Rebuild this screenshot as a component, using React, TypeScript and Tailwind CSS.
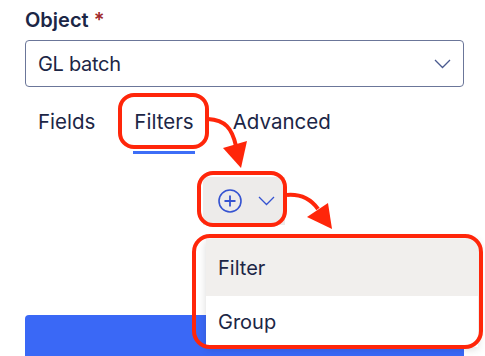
import React from 'react';

const tabs = ['Fields', 'Filters', 'Advanced'];
const menuItems = ['Filter', 'Group'];

function Chevron({ className }: { className?: string }) {
  return (
    <svg width="17" height="10" viewBox="0 0 17 10" className={className} fill="none">
      <path d="M1 1 L8.5 8.5 L16 1" stroke="currentColor" strokeWidth="1.3" />
    </svg>
  );
}

function Annotations() {
  const red = '#ff260a';
  return (
    <svg className="absolute inset-0 pointer-events-none" width="485" height="356" viewBox="0 0 485 356" fill="none">
      {/* tab highlight */}
      <rect x="120" y="95" width="87" height="52" rx="14" stroke={red} strokeWidth="4" />
      <path d="M208 119 C225 120 232 128 236 146" stroke={red} strokeWidth="4" />
      <path d="M223 148 L247 141 L241 168 Z" fill={red} />
      {/* add button highlight */}
      <rect x="199" y="173" width="86" height="52" rx="14" stroke={red} strokeWidth="4" />
      <path d="M287 195 C300 194 310 198 318 209" stroke={red} strokeWidth="4" />
      <path d="M307 217 L328 203 L332 229 Z" fill={red} />
      {/* menu highlight */}
      <rect x="194" y="236" width="287" height="111" rx="16" stroke={red} strokeWidth="4" />
    </svg>
  );
}

export default function App() {
  return (
    <div className="relative w-[485px] h-[356px] overflow-hidden bg-white text-[#1c2646] font-['Inter',sans-serif]">
      <div className="pl-[25px] pr-[21px] pt-[6px]">
        <div className="text-[20px] font-semibold leading-[28px] h-[34px]">
          Object <span className="text-[#a0282a]">*</span>
        </div>
        <div className="flex items-center justify-between h-[47px] border border-[#6b7699] rounded-[4px] pl-[12px] pr-[12px]">
          <span className="text-[20px] tracking-[-0.3px]">GL batch</span>
          <Chevron className="text-[#4a5a8f]" />
        </div>
        <div className="flex gap-[39px] pl-[13px] mt-[21px] text-[20.5px] leading-[28px]">
          {tabs.map((tab) => (
            <div
              key={tab}
              className={
                tab === 'Filters'
                  ? 'pb-[15px] border-b-[3px] border-[#3d6ef7] px-[1px] -mx-[1px]'
                  : 'pb-[15px] border-b-[3px] border-transparent'
              }
            >
              {tab}
            </div>
          ))}
        </div>
        <div className="flex ml-[178px] mt-[23px]">
          <div className="flex items-center gap-[16px] w-[82px] h-[48px] bg-[#edebea] pl-[15px]">
            <svg width="24" height="24" viewBox="0 0 24 24" fill="none" className="text-[#3553d1]">
              <circle cx="12" cy="12" r="11" stroke="currentColor" strokeWidth="1.6" />
              <path d="M12 6.5 V17.5 M6.5 12 H17.5" stroke="currentColor" strokeWidth="1.8" />
            </svg>
            <Chevron className="text-[#3553d1]" />
          </div>
        </div>
        <div className="mt-[90px] h-[60px] bg-[#3a68f6] rounded-t-[4px]" />
      </div>

      <div className="absolute left-[206px] top-[239px] w-[272px] bg-white shadow-[0_2px_8px_rgba(0,0,0,0.15)] text-[20px]">
        {menuItems.map((item, i) => (
          <div
            key={item}
            className={`flex items-center pl-[12px] ${i === 0 ? 'h-[57px] bg-[#f1efed]' : 'h-[51px] bg-white'}`}
          >
            {item}
          </div>
        ))}
      </div>

      <Annotations />
    </div>
  );
}
